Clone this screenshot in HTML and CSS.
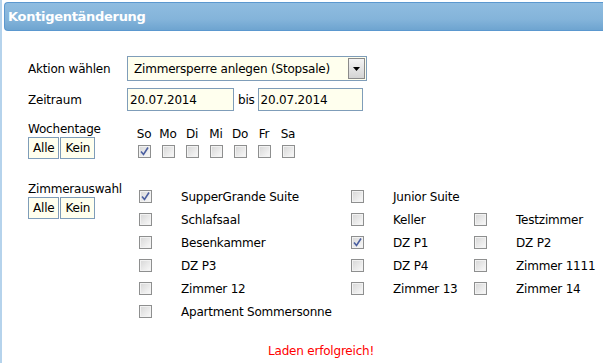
FILE: index.html
```html
<!DOCTYPE html>
<html lang="de">
<head>
    <meta charset="UTF-8">
    <title>Kontigentänderung</title>
    <link rel="stylesheet" href="styles.css">
</head>
<body>
    <div class="panel">
        <div class="header">Kontigentänderung</div>

        <div class="form">
            <div class="row row-action">
                <span class="label">Aktion wählen</span>
                <div class="select">
                    <span class="select-text">Zimmersperre anlegen (Stopsale)</span>
                    <span class="select-btn">
                        <svg width="7" height="4" viewBox="0 0 7 4"><path d="M0 0H7L3.5 4Z" fill="#000"/></svg>
                    </span>
                </div>
            </div>

            <div class="row row-date">
                <span class="label">Zeitraum</span>
                <input class="field" type="text" value="20.07.2014">
                <span class="bis">bis</span>
                <input class="field field-to" type="text" value="20.07.2014">
            </div>

            <div class="row row-days">
                <div class="label-block">
                    <div class="label">Wochentage</div>
                    <div class="btns"><button class="btn">Alle</button><button class="btn">Kein</button></div>
                </div>
                <div class="days">
                    <div class="day"><span>So</span><span class="cb checked"><svg width="9" height="9" viewBox="0 0 9 9"><path d="M1 4.5L3.5 7.5L8 0.5" fill="none" stroke="#4b5fa0" stroke-width="1.6"/></svg></span></div>
                    <div class="day"><span>Mo</span><span class="cb"></span></div>
                    <div class="day"><span>Di</span><span class="cb"></span></div>
                    <div class="day"><span>Mi</span><span class="cb"></span></div>
                    <div class="day"><span>Do</span><span class="cb"></span></div>
                    <div class="day"><span>Fr</span><span class="cb"></span></div>
                    <div class="day"><span>Sa</span><span class="cb"></span></div>
                </div>
            </div>

            <div class="row row-rooms">
                <div class="label-block">
                    <div class="label">Zimmerauswahl</div>
                    <div class="btns"><button class="btn">Alle</button><button class="btn">Kein</button></div>
                </div>
                <div class="rooms">
                    <div class="room"><span class="cb checked"><svg width="9" height="9" viewBox="0 0 9 9"><path d="M1 4.5L3.5 7.5L8 0.5" fill="none" stroke="#4b5fa0" stroke-width="1.6"/></svg></span><span>SupperGrande Suite</span></div>
                    <div class="room"><span class="cb"></span><span>Junior Suite</span></div>
                    <div class="room"></div>

                    <div class="room"><span class="cb"></span><span>Schlafsaal</span></div>
                    <div class="room"><span class="cb"></span><span>Keller</span></div>
                    <div class="room"><span class="cb"></span><span>Testzimmer</span></div>

                    <div class="room"><span class="cb"></span><span>Besenkammer</span></div>
                    <div class="room"><span class="cb checked"><svg width="9" height="9" viewBox="0 0 9 9"><path d="M1 4.5L3.5 7.5L8 0.5" fill="none" stroke="#4b5fa0" stroke-width="1.6"/></svg></span><span>DZ P1</span></div>
                    <div class="room"><span class="cb"></span><span>DZ P2</span></div>

                    <div class="room"><span class="cb"></span><span>DZ P3</span></div>
                    <div class="room"><span class="cb"></span><span>DZ P4</span></div>
                    <div class="room"><span class="cb"></span><span>Zimmer 1111</span></div>

                    <div class="room"><span class="cb"></span><span>Zimmer 12</span></div>
                    <div class="room"><span class="cb"></span><span>Zimmer 13</span></div>
                    <div class="room"><span class="cb"></span><span>Zimmer 14</span></div>

                    <div class="room room-wide"><span class="cb"></span><span>Apartment Sommersonne</span></div>
                </div>
            </div>

            <div class="status">Laden erfolgreich!</div>
        </div>
    </div>
</body>
</html>
```

FILE: styles.css
```css
body {
    margin: 0;
    font-family: "DejaVu Sans", Verdana, sans-serif;
    font-size: 12px;
    letter-spacing: -0.2px;
    color: #000;
    background: #fff;
}

.panel {
    height: 363px;
    border-left: 2px solid #b5d3ec;
    box-sizing: border-box;
    overflow: hidden;
}

.header {
    margin: 2px 0 0 2px;
    height: 29px;
    box-sizing: border-box;
    padding: 6px 0 0 3px;
    border: 1px solid #5b98cf;
    border-right: none;
    border-radius: 4px 0 0 4px;
    background: linear-gradient(to bottom, #8fbce0 0%, #84b4da 60%, #6ea4d0 100%);
    color: #fff;
    font-size: 13px;
    font-weight: bold;
    letter-spacing: -0.3px;
}

.form {
    padding-left: 26px;
}

.row {
    display: flex;
    align-items: center;
}

.label {
    width: 99px;
    flex-shrink: 0;
    white-space: nowrap;
}

.row-action {
    margin-top: 25px;
    height: 25px;
}

.select {
    width: 240px;
    height: 25px;
    box-sizing: border-box;
    border: 1px solid #7f9db9;
    background: #ffffee;
    display: flex;
    align-items: center;
    justify-content: space-between;
    padding: 0 1px 0 6px;
}

.select-btn {
    width: 17px;
    height: 21px;
    box-sizing: border-box;
    border: 1px solid #8a8a8a;
    background: linear-gradient(to bottom, #f4f4f4, #d4d4d4);
    display: flex;
    align-items: center;
    justify-content: center;
}

.row-date {
    margin-top: 7px;
    height: 23px;
}

.field {
    width: 107px;
    height: 23px;
    box-sizing: border-box;
    border: 1px solid #7f9db9;
    background: #ffffee;
    font: inherit;
    letter-spacing: inherit;
    padding: 0 2px;
    margin: 0;
}

.field-to {
    width: 105px;
}

.bis {
    padding: 0 3px 0 4px;
}

.label-block .label {
    line-height: 16px;
}

.btns {
    display: flex;
}

.btn {
    height: 22px;
    box-sizing: border-box;
    border: 1px solid #7f9db9;
    background: #ffffee;
    font: inherit;
    letter-spacing: inherit;
    color: #000;
    padding: 0 4px;
    margin: 0 1px 0 0;
}

.row-days {
    margin-top: 10px;
    align-items: flex-start;
}

.days {
    display: flex;
    margin-left: 5px;
    margin-top: 6px;
}

.day {
    width: 24px;
    display: flex;
    flex-direction: column;
    align-items: center;
    gap: 4px;
}

.cb {
    width: 13px;
    height: 13px;
    box-sizing: border-box;
    border: 1px solid #8e8f8f;
    background: linear-gradient(135deg, #d6d6d6, #fafafa);
    box-shadow: inset 0 0 0 1px #f2f2f2;
    display: flex;
    align-items: center;
    justify-content: center;
    flex-shrink: 0;
}

.row-rooms {
    margin-top: 22px;
    align-items: flex-start;
}

.rooms {
    display: grid;
    grid-template-columns: 212px 123px 130px;
    margin-left: 12px;
    margin-top: 4px;
}

.room {
    height: 23px;
    display: flex;
    align-items: center;
    gap: 29px;
    white-space: nowrap;
}

.room-wide {
    grid-column: span 3;
}

.status {
    color: #ff0000;
    margin: 21px 0 0 240px;
}
```
